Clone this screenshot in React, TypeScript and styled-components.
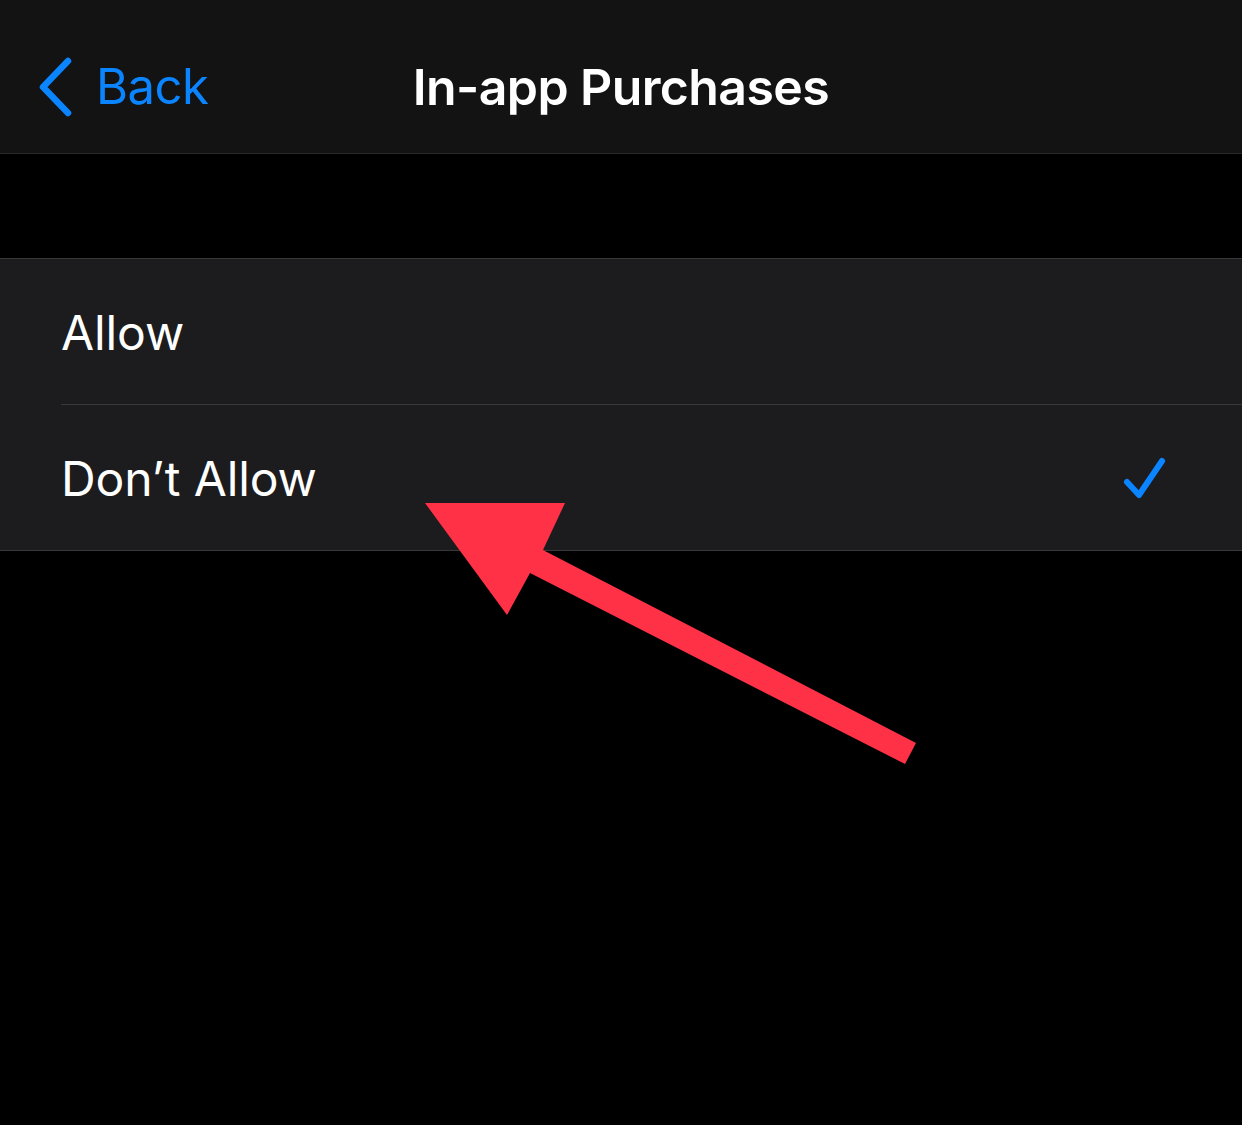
import React from 'react';
import styled, { createGlobalStyle } from 'styled-components';

const GlobalStyle = createGlobalStyle`
  html, body {
    margin: 0;
    padding: 0;
    background: #000;
  }
  body {
    font-family: Inter, "Noto Sans", "Liberation Sans", sans-serif;
    -webkit-font-smoothing: antialiased;
  }
`;

const Screen = styled.div`
  position: relative;
  width: 1242px;
  height: 1125px;
  background: #000;
  overflow: hidden;
`;

const NavBar = styled.header`
  display: grid;
  grid-template-columns: 1fr auto 1fr;
  align-items: center;
  box-sizing: border-box;
  height: 154px;
  padding-top: 20px;
  background: #131313;
  border-bottom: 1px solid #2a2a2c;
`;

const BackButton = styled.button`
  justify-self: start;
  display: flex;
  align-items: center;
  gap: 22px;
  margin-left: 38px;
  padding: 0;
  border: 0;
  background: none;
  color: #0a84ff;
  font-family: inherit;
  font-size: 49px;
  font-weight: 400;
  letter-spacing: -0.5px;
  cursor: pointer;
`;

const Title = styled.h1`
  margin: 0;
  color: #fff;
  font-size: 50px;
  font-weight: 600;
  letter-spacing: -0.6px;
`;

const Group = styled.ul`
  list-style: none;
  margin: 104px 0 0;
  padding: 0;
  background: #1c1c1e;
  border-top: 1px solid #38383a;
  border-bottom: 1px solid #38383a;
`;

const Row = styled.li<{ last?: boolean }>`
  display: flex;
  align-items: center;
  justify-content: space-between;
  height: 143px;
  margin-left: 61px;
  padding-right: 74px;
  padding-top: 2px;
  border-bottom: ${({ last }) => (last ? 'none' : '1px solid #38383a')};
  color: #fff;
  font-size: 48px;
  font-weight: 400;
  letter-spacing: -0.1px;
`;

const Overlay = styled.svg`
  position: absolute;
  inset: 0;
  pointer-events: none;
`;

const Chevron = () => (
  <svg width="36" height="60" viewBox="0 0 36 60">
    <path d="M30 4 L5 30 L30 56" fill="none" stroke="currentColor" strokeWidth="6.5" strokeLinecap="round" strokeLinejoin="round" />
  </svg>
);

const Check = () => (
  <svg width="46" height="46" viewBox="0 0 46 46">
    <path d="M5 26 L17 39 L40 5" fill="none" stroke="#0a84ff" strokeWidth="6" strokeLinecap="round" strokeLinejoin="round" />
  </svg>
);

const options = [
  { label: 'Allow', selected: false },
  { label: 'Don’t Allow', selected: true },
];

export default function App() {
  return (
    <Screen>
      <GlobalStyle />
      <NavBar>
        <BackButton>
          <Chevron />
          Back
        </BackButton>
        <Title>In-app Purchases</Title>
        <div />
      </NavBar>
      <Group>
        {options.map((o, i) => (
          <Row key={o.label} last={i === options.length - 1}>
            <span>{o.label}</span>
            {o.selected && <Check />}
          </Row>
        ))}
      </Group>
      <Overlay width="1242" height="1125" viewBox="0 0 1242 1125">
        <polygon points="425,503 565,503 543,550 916,743 905,764 530,573 507,615" fill="#fe3146" />
      </Overlay>
    </Screen>
  );
}
